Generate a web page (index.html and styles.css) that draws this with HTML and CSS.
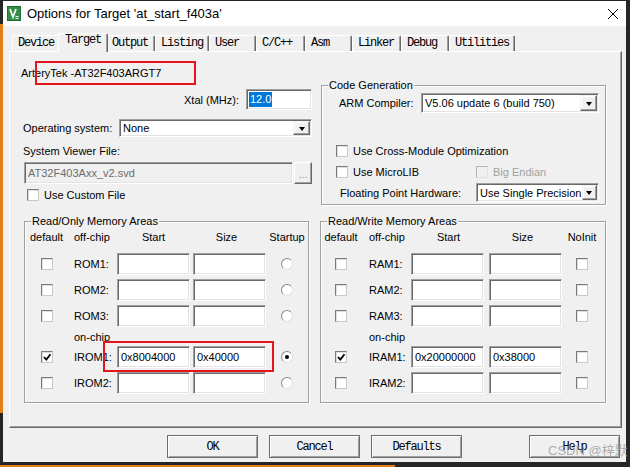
FILE: index.html
```html
<!DOCTYPE html>
<html>
<head>
<meta charset="utf-8">
<title>Options for Target</title>
<link rel="stylesheet" href="styles.css">
</head>
<body>
<div class="window">
  <div class="titlebar">
    <svg class="app-icon" viewBox="0 0 14 15" aria-hidden="true">
      <rect x="0" y="0" width="14" height="15" fill="#1d6e33"/>
      <rect x="1" y="1" width="12" height="13" fill="#2f8f45"/>
      <path d="M3 3 L6 11 L9 3" fill="none" stroke="#fff" stroke-width="1.8"/>
      <path d="M8.5 10.5 h3 M8.5 12.5 h3" stroke="#fff" stroke-width="1"/>
    </svg>
    <span class="title">Options for Target 'at_start_f403a'</span>
    <svg class="close" viewBox="0 0 10 10" aria-hidden="true">
      <path d="M0 0 L10 10 M10 0 L0 10" stroke="#000" stroke-width="1"/>
    </svg>
  </div>

  <div class="client">
    <div class="tabs">
      <div class="tab t-device">Device</div>
      <div class="tab t-target active">Target</div>
      <div class="tab t-output">Output</div>
      <div class="tab t-listing">Listing</div>
      <div class="tab t-user">User</div>
      <div class="tab t-cc">C/C++</div>
      <div class="tab t-asm">Asm</div>
      <div class="tab t-linker">Linker</div>
      <div class="tab t-debug">Debug</div>
      <div class="tab t-util">Utilities</div>
    </div>

    <div class="page">
      <div class="top">
        <div class="left-col">
          <div class="device">ArteryTek -AT32F403ARGT7</div>
          <div class="xtal-row">
            <span>Xtal (MHz):</span>
            <div class="edit xtal"><span class="sel">12.0</span></div>
          </div>
          <div class="os-row">
            <span>Operating system:</span>
            <div class="combo os"><span class="combo-text">None</span><span class="combo-btn"><i class="tri"></i></span></div>
          </div>
          <div class="svf-label">System Viewer File:</div>
          <div class="svd-row">
            <div class="edit disabled svd">AT32F403Axx_v2.svd</div>
            <div class="browse">...</div>
          </div>
          <div class="check-row custom"><span class="cb"></span><span>Use Custom File</span></div>
        </div>

        <div class="group codegen">
          <span class="legend">Code Generation</span>
          <div class="cg-row1">
            <span class="cg-lbl">ARM Compiler:</span>
            <div class="combo compiler"><span class="combo-text">V5.06 update 6 (build 750)</span><span class="combo-btn"><i class="tri"></i></span></div>
          </div>
          <div class="check-row cg-cross"><span class="cb"></span><span>Use Cross-Module Optimization</span></div>
          <div class="cg-micro">
            <div class="check-row micro"><span class="cb"></span><span>Use MicroLIB</span></div>
            <div class="check-row dis"><span class="cb disabled"></span><span>Big Endian</span></div>
          </div>
          <div class="cg-fph">
            <span class="fph-lbl">Floating Point Hardware:</span>
            <div class="combo fph"><span class="combo-text">Use Single Precision</span><span class="combo-btn"><i class="tri"></i></span></div>
          </div>
        </div>
      </div>

      <div class="bottom">
        <div class="group mem rom">
          <span class="legend">Read/Only Memory Areas</span>
          <div class="mrow head"><span class="c">default</span><span class="l">off-chip</span><span class="c st">Start</span><span class="c sz">Size</span><span class="c">Startup</span></div>
          <div class="mrow first"><span class="c"><span class="cb"></span></span><span class="l">ROM1:</span><span class="edit"></span><span class="edit"></span><span class="c"><span class="rb"></span></span></div>
          <div class="mrow"><span class="c"><span class="cb"></span></span><span class="l">ROM2:</span><span class="edit"></span><span class="edit"></span><span class="c"><span class="rb"></span></span></div>
          <div class="mrow"><span class="c"><span class="cb"></span></span><span class="l">ROM3:</span><span class="edit"></span><span class="edit"></span><span class="c"><span class="rb"></span></span></div>
          <div class="mrow onchip"><span></span><span class="l">on-chip</span></div>
          <div class="mrow after-onchip"><span class="c"><span class="cb checked"><svg viewBox="0 0 10 10"><path d="M2 5 L4.3 7.6 L8.5 2.2" fill="none" stroke="#000" stroke-width="1.8"/></svg></span></span><span class="l">IROM1:</span><span class="edit">0x8004000</span><span class="edit">0x40000</span><span class="c"><span class="rb on"></span></span></div>
          <div class="mrow"><span class="c"><span class="cb"></span></span><span class="l">IROM2:</span><span class="edit"></span><span class="edit"></span><span class="c"><span class="rb"></span></span></div>
        </div>

        <div class="group mem ram">
          <span class="legend">Read/Write Memory Areas</span>
          <div class="mrow head"><span class="c">default</span><span class="l">off-chip</span><span class="c st">Start</span><span class="c sz">Size</span><span class="c">NoInit</span></div>
          <div class="mrow first"><span class="c"><span class="cb"></span></span><span class="l">RAM1:</span><span class="edit"></span><span class="edit"></span><span class="c"><span class="cb"></span></span></div>
          <div class="mrow"><span class="c"><span class="cb"></span></span><span class="l">RAM2:</span><span class="edit"></span><span class="edit"></span><span class="c"><span class="cb"></span></span></div>
          <div class="mrow"><span class="c"><span class="cb"></span></span><span class="l">RAM3:</span><span class="edit"></span><span class="edit"></span><span class="c"><span class="cb"></span></span></div>
          <div class="mrow onchip"><span></span><span class="l">on-chip</span></div>
          <div class="mrow after-onchip"><span class="c"><span class="cb checked"><svg viewBox="0 0 10 10"><path d="M2 5 L4.3 7.6 L8.5 2.2" fill="none" stroke="#000" stroke-width="1.8"/></svg></span></span><span class="l">IRAM1:</span><span class="edit">0x20000000</span><span class="edit">0x38000</span><span class="c"><span class="cb"></span></span></div>
          <div class="mrow"><span class="c"><span class="cb"></span></span><span class="l">IRAM2:</span><span class="edit"></span><span class="edit"></span><span class="c"><span class="cb"></span></span></div>
        </div>
      </div>

      <div class="mark mark-device"></div>
      <div class="mark mark-irom"></div>
    </div>

    <div class="buttons">
      <div class="btn">OK</div>
      <div class="btn">Cancel</div>
      <div class="btn">Defaults</div>
      <div class="btn help">Help</div>
    </div>
  </div>
  <div class="watermark">CSDN @梓默</div>
</div>
</body>
</html>
```

FILE: styles.css
```css
* { box-sizing: border-box; }
html, body { margin: 0; }
body {
  width: 630px;
  height: 467px;
  overflow: hidden;
  padding: 1px 4px 5px 3px;
  background:
    linear-gradient(#e47e17, #e47e17) 0 24px / 3px 389px no-repeat,
    linear-gradient(#e47e17, #e47e17) 0 465px / 395px 2px no-repeat,
    #262626;
  font-family: "Liberation Sans", Arial, sans-serif;
  font-size: 11px;
  color: #000;
}
.window {
  position: relative;
  width: 623px;
  height: 461px;
  background: #f0f0f0;
  display: flex;
  flex-direction: column;
}
.titlebar {
  flex: none;
  height: 25px;
  background: #fff;
  display: flex;
  align-items: center;
  padding-left: 4px;
}
.app-icon { width: 14px; height: 15px; margin-right: 6px; }
.title { font-size: 13px; color: #000; }
.close { margin-left: auto; margin-right: 8px; width: 10px; height: 10px; }

.client { flex: 1; padding-top: 7px; }

.tabs {
  display: flex;
  align-items: flex-start;
  height: 19px;
  margin-left: 9px;
  margin-bottom: -1px;
  position: relative;
  z-index: 1;
}
.tab {
  height: 16px;
  margin-top: 2px;
  padding-left: 5px;
  font-family: "Liberation Mono", "Courier New", monospace;
  font-size: 12px;
  letter-spacing: -1.2px;
  line-height: 14px;
  white-space: pre;
  background: #f0f0f0;
  border-top: 1px solid #fff;
  border-left: 1px solid #fff;
  border-right: 1px solid #696969;
  box-shadow: inset -1px 0 #a0a0a0;
  border-radius: 2px 2px 0 0;
}
.tab.active {
  position: relative;
  z-index: 2;
  height: 19px;
  margin-top: 0;
  margin-left: -2px;
  margin-right: -2px;
  padding-left: 6px;
  line-height: 13px;
}
.t-device { width: 48px; }
.t-target { width: 50px; }
.t-output { width: 49px; }
.t-listing { width: 54px; }
.t-user { width: 47px; }
.t-cc { width: 49px; }
.t-asm { width: 47px; }
.t-linker { width: 49px; }
.t-debug { width: 48px; }
.t-util { width: 66px; }

.page {
  position: relative;
  margin-left: 6px;
  width: 613px;
  height: 377px;
  border: 1px solid;
  border-color: #fff #696969 #696969 #fff;
  box-shadow: inset -1px -1px #a0a0a0;
}

.top { display: flex; height: 169px; }
.left-col { margin-left: 11px; width: 291px; padding-top: 15px; }
.device { height: 13px; line-height: 13px; }
.xtal-row {
  display: flex;
  justify-content: flex-end;
  align-items: center;
  gap: 7px;
  margin-top: 9px;
  height: 21px;
}
.os-row {
  display: flex;
  justify-content: space-between;
  align-items: center;
  margin-top: 9px;
  height: 18px;
  padding-left: 2px;
}
.svf-label { margin-top: 8px; height: 13px; line-height: 13px; padding-left: 2px; }
.svd-row { display: flex; gap: 1px; margin-top: 4px; height: 22px; padding-left: 3px; }

.edit {
  display: flex;
  align-items: center;
  background: #fff;
  border: 1px solid;
  border-color: #a0a0a0 #fff #fff #a0a0a0;
  box-shadow: inset 1px 1px #696969, inset -1px -1px #e3e3e3;
  padding-left: 3px;
  white-space: nowrap;
  overflow: hidden;
}
.edit.xtal { width: 66px; height: 21px; padding-left: 2px; }
.sel { background: #0078d7; color: #fff; line-height: 15px; padding: 0 1px; }
.edit.disabled { background: #f0f0f0; color: #6d6d6d; }
.svd { width: 269px; height: 22px; }
.browse {
  width: 18px;
  height: 22px;
  border: 1px solid;
  border-color: #fff #696969 #696969 #fff;
  box-shadow: inset -1px -1px #a0a0a0;
  color: #8a8a8a;
  text-align: center;
  line-height: 24px;
  font-size: 10px;
}

.combo {
  display: flex;
  background: #fff;
  border: 1px solid;
  border-color: #a0a0a0 #fff #fff #a0a0a0;
  box-shadow: inset 1px 1px #696969, inset -1px -1px #e3e3e3;
  padding: 1px;
}
.combo-text { flex: 1; display: flex; align-items: center; padding-left: 2px; white-space: nowrap; }
.combo-btn {
  width: 17px;
  display: flex;
  align-items: center;
  justify-content: center;
  background: #f0f0f0;
  border: 1px solid;
  border-color: #f0f0f0 #696969 #696969 #f0f0f0;
  box-shadow: inset -1px -1px #a0a0a0, inset 1px 1px #fff;
}
.tri {
  display: block;
  width: 0;
  height: 0;
  border-left: 3.5px solid transparent;
  border-right: 3.5px solid transparent;
  border-top: 4px solid #000;
  margin-top: 1px;
}
.combo.os { width: 193px; height: 18px; }
.combo.compiler { width: 178px; height: 20px; }
.combo.fph { width: 123px; height: 19px; }

.check-row { display: flex; align-items: center; gap: 5px; height: 12px; white-space: nowrap; }
.custom { margin-top: 5px; padding-left: 6px; }
.cb {
  flex: none;
  display: inline-block;
  width: 12px;
  height: 12px;
  background: #fff;
  border: 1px solid;
  border-color: #7a7a7a #c8c8c8 #c8c8c8 #7a7a7a;
  box-shadow: inset 1px 1px #e0e0e0;
}
.cb svg { display: block; width: 10px; height: 10px; }
.cb.disabled { background: #f0f0f0; border-color: #b4b4b4 #e3e3e3 #e3e3e3 #b4b4b4; box-shadow: none; }
.dis { color: #a0a0a0; }

.rb {
  display: inline-block;
  position: relative;
  width: 12px;
  height: 12px;
  border-radius: 50%;
  background: #fff;
  border: 1px solid;
  border-color: #8a8a8a #e0e0e0 #e0e0e0 #8a8a8a;
}
.rb.on::after {
  content: "";
  position: absolute;
  left: 3px;
  top: 3px;
  width: 4px;
  height: 4px;
  border-radius: 50%;
  background: #000;
}

.group {
  position: relative;
  border: 1px solid #a0a0a0;
  box-shadow: inset 1px 1px #fff, 1px 1px #fff;
}
.legend {
  position: absolute;
  top: -7px;
  left: 6px;
  padding: 0 1px;
  line-height: 13px;
  background: #f0f0f0;
  white-space: nowrap;
}

.codegen { margin-left: 9px; margin-top: 33px; width: 285px; height: 120px; }
.cg-row1 { display: flex; align-items: center; margin-top: 7px; padding-left: 17px; height: 20px; }
.cg-lbl { width: 82px; }
.cg-cross { margin-top: 32px; padding-left: 14px; }
.cg-micro { display: flex; margin-top: 9px; padding-left: 14px; }
.micro { width: 140px; }
.cg-fph { display: flex; align-items: center; margin-top: 5px; padding-left: 18px; height: 19px; }
.fph-lbl { width: 136px; }

.bottom { display: flex; gap: 11px; padding-left: 14px; }
.mem { height: 182px; padding-top: 9px; }
.rom { width: 285px; }
.ram { width: 286px; }
.mrow { display: grid; align-items: center; height: 22px; margin-top: 4px; }
.rom .mrow { grid-template-columns: 43px 49px 76px 73px 42px; }
.ram .mrow { grid-template-columns: 40px 50px 78px 73px 40px; }
.mrow.head { height: 13px; margin-top: 0; line-height: 13px; }
.mrow.first { margin-top: 9px; }
.mrow.onchip { height: 13px; line-height: 13px; }
.mrow.after-onchip { margin-top: 2px; }
.mrow .c { display: flex; justify-content: center; align-items: center; white-space: nowrap; }
.mrow .st { padding-right: 3px; }
.mrow .sz { padding-right: 6px; }
.rom .mrow .l { padding-left: 6px; }
.ram .mrow .l { padding-left: 8px; }
.mrow .edit { width: 73px; height: 22px; }

.mark { position: absolute; border: 2px solid #e3141c; }
.mark-device { left: 25px; top: 9px; width: 161px; height: 24px; }
.mark-irom { left: 93px; top: 289px; width: 171px; height: 31px; }

.buttons {
  display: flex;
  justify-content: flex-end;
  gap: 11px;
  margin-top: 7px;
  padding-right: 6px;
}
.btn {
  width: 91px;
  height: 23px;
  border: 1px solid #6d6d6d;
  box-shadow: inset 1px 1px #fff, inset -1px -1px #a0a0a0;
  display: flex;
  align-items: center;
  justify-content: center;
  font-family: "Liberation Mono", "Courier New", monospace;
  font-size: 12px;
  letter-spacing: -1.2px;
}
.btn.help { margin-left: 56px; }

.watermark {
  position: absolute;
  left: 545px;
  top: 442px;
  font-size: 13px;
  line-height: 15px;
  color: rgba(150, 150, 150, 0.75);
  font-family: "Liberation Sans", "Noto Sans CJK SC", sans-serif;
  white-space: nowrap;
}
```
